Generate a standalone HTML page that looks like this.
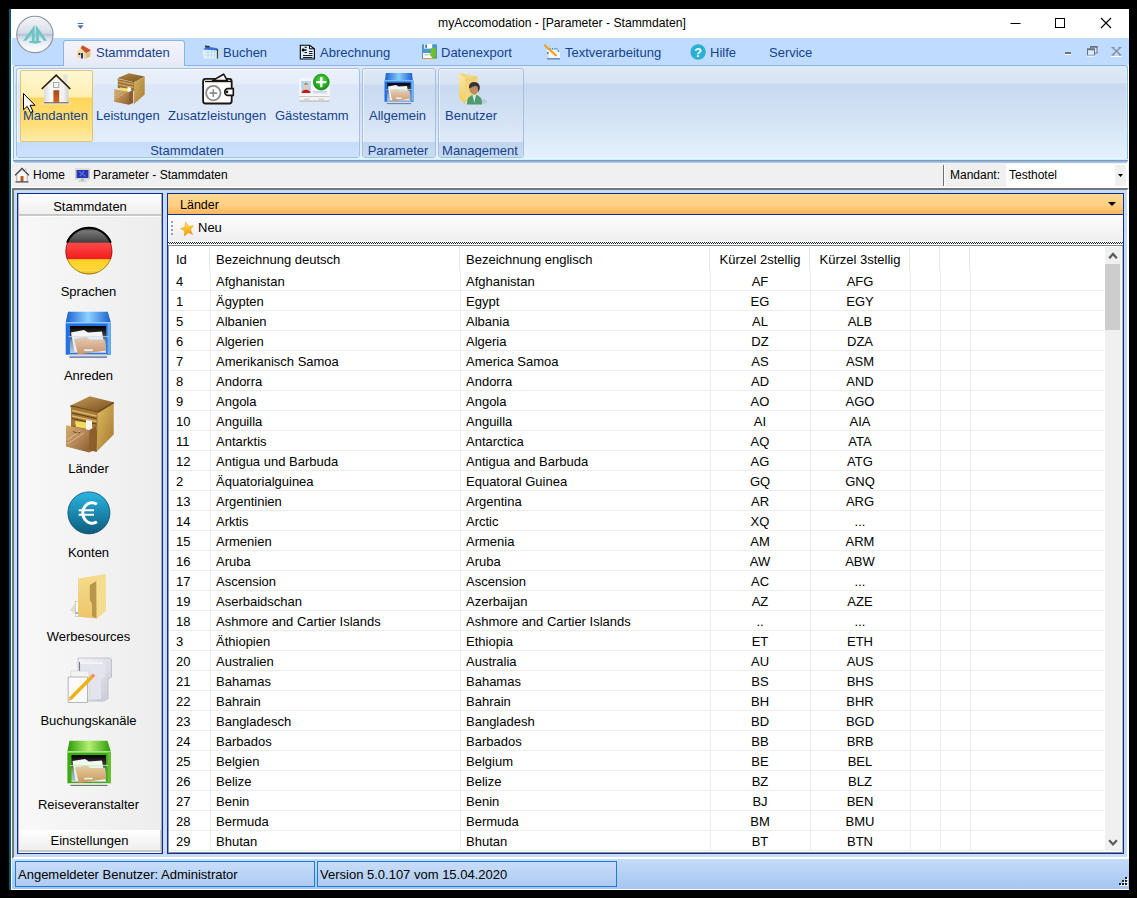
<!DOCTYPE html>
<html><head><meta charset="utf-8"><title>myAccomodation</title>
<style>
*{margin:0;padding:0;box-sizing:border-box}
html,body{width:1137px;height:898px;overflow:hidden;background:#000}
body{position:relative;font-family:"Liberation Sans",sans-serif;font-size:13px;color:#000}
.a{position:absolute}
svg{position:absolute;overflow:visible}
#win{position:absolute;left:9px;top:9px;width:1120px;height:881px;background:#fff}
#tealL{position:absolute;left:9px;top:9px;width:2px;height:881px;background:#0b5a70}
/* title */
#titletxt{position:absolute;left:438px;top:16px;font-size:12.2px;color:#000;white-space:nowrap;line-height:14px}
/* tab strip */
#tabs{position:absolute;left:12px;top:38px;width:1117px;height:27px;background:#bfdbff}
.tab{position:absolute;top:45px;white-space:nowrap;color:#15428b;font-size:13px;line-height:15px}
#acttab{position:absolute;left:63px;top:40px;width:122px;height:26px;border:1px solid #8db2e3;border-bottom:none;border-radius:3px 3px 0 0;background:linear-gradient(#f3f3fb,#e9ecf8 80%,#e2eaf6)}
/* ribbon */
#ribbon{position:absolute;left:13px;top:65px;width:1115px;height:95px;border:1px solid #8db2e3;border-bottom:none;border-radius:3px 3px 0 0;box-shadow:inset 1px 0 0 #d4f6ff,inset -1px 0 0 #d4f6ff;background:linear-gradient(#e0eaf6 0,#d7e4f3 17px,#c7d9f0 18px,#d2e2f4 50px,#e6f2fd 94px)}
#ribbonbot{position:absolute;left:13px;top:159px;width:1115px;height:4px;border-radius:0 0 3px 3px;background:linear-gradient(#c8f4ff 0 1px,#7f9abd 1px 2px,#96b3d8 2px 3px,#aac6e8 3px)}
.grp{position:absolute;top:68px;height:90px;border:1px solid #a7c0e0;border-radius:3px;background:linear-gradient(#dee8f5 0,#d8e4f3 15px,#c9daf0 16px,#d3e2f4 50px,#dfeaf8 73px);overflow:hidden;box-shadow:inset 1px 1px 0 rgba(255,255,255,.5)}
.grp.hot{background:linear-gradient(#eaf1fb 0,#e4edfa 15px,#dbe7f8 16px,#dde9f9 50px,#e4eefb 73px)}
.grp .lbl{position:absolute;left:0;top:73px;width:100%;height:16px;background:linear-gradient(#c1d5ef,#c9dbf2);color:#15428b;text-align:center;font-size:13px;line-height:17px;white-space:nowrap;text-indent:-2px}
.grp.hot .lbl{background:linear-gradient(#c5ddfb,#cde2fc)}
.rbt{position:absolute;top:109px;color:#15428b;font-size:13px;white-space:nowrap;line-height:14px}
/* address bar */
#addr{position:absolute;left:12px;top:163px;width:1117px;height:25px;background:#f0f0f0;border-top:1px solid #f4f2f0;border-bottom:1px solid #fff}
.at{position:absolute;top:168px;font-size:12px;white-space:nowrap;line-height:14px;color:#000}
/* main frame */
#frame{position:absolute;left:12px;top:188px;width:1117px;height:671px;border-top:2px solid #767676;border-left:2px solid #767676;border-bottom:2px solid #fff;border-right:2px solid #fff;background:#c6dcfa}
/* status */
#status{position:absolute;left:12px;top:859px;width:1117px;height:31px;background:linear-gradient(#c5dbf8,#a5c5f1);border-bottom:1px solid #fff}
.sp{position:absolute;top:861px;height:26px;border:1px solid #1b7ce0;white-space:nowrap;font-size:13px;padding-left:2px;line-height:26px;color:#000;background:linear-gradient(#c8ddf8,#aecbf2)}
/* left panel */
#lp{position:absolute;left:17px;top:193px;width:146px;height:661px;border:1px solid #0a2e9a;background:#fff}
.hdrbtn{position:absolute;left:19px;width:142px;height:22px;background:linear-gradient(#ffffff,#eeeeee);border-bottom:2px solid #c9c9c9;text-align:center;line-height:25px;font-size:13px;white-space:nowrap}
#lpbody{position:absolute;left:19px;top:217px;width:143px;height:613px;background:linear-gradient(90deg,#f8f8f8,#ededed)}
.li{position:absolute;left:17px;width:143px;text-align:center;font-size:13px;line-height:14px;white-space:nowrap}
/* content panel */
#cp{position:absolute;left:167px;top:193px;width:957px;height:661px;border:1px solid #0a2e9a;background:#fff}
#orange{position:absolute;left:168px;top:194px;width:955px;height:21px;background:linear-gradient(#ffd891 0,#ffcf84 55%,#feb55d 100%);border-bottom:1px solid #0a2e9a}
#tb{position:absolute;left:168px;top:215px;width:955px;height:30px;background:linear-gradient(#fdfdfd,#eeeeee 26px,#fff 27px)}
#checker{position:absolute;left:168px;top:242px;width:955px;height:3px}
#gline{position:absolute;left:168px;top:245px;width:955px;height:1px;background:#7f8792}
#grid{position:absolute;left:168px;top:246px;width:955px;height:607px;background:#fff;overflow:hidden}
.gh{position:absolute;top:253px;white-space:nowrap;line-height:14px}
.gr{position:absolute;left:170px;width:934px;height:20px;line-height:20px;border-bottom:1px solid #ededed;white-space:nowrap}
.gr span{position:absolute;top:1px}
.c0{left:6px}.c1{left:46px}.c2{left:296px}.c3{left:540px;width:100px;text-align:center}.c4{left:640px;width:100px;text-align:center}
.vl{position:absolute;width:1px;background:#ececec}

</style></head>
<body>
<div id="win"></div>
<div id="tealL"></div>
<!-- title bar -->
<div id="titletxt">myAccomodation - [Parameter - Stammdaten]</div>
<svg style="left:0;top:0" width="1137" height="40">
<path d="M1010.5 23.5H1020.5" stroke="#000" stroke-width="1"/>
<rect x="1055.5" y="18.5" width="9" height="9" fill="none" stroke="#000" stroke-width="1"/>
<path d="M1101 18L1111 28M1111 18L1101 28" stroke="#000" stroke-width="1.1"/>
<path d="M77.7 23.5H83.3" stroke="#4a6fb3" stroke-width="1"/>
<path d="M77.5 25.3H83.5L80.5 29Z" fill="#4a6fb3"/>
</svg>

<!-- tabs -->
<div id="tabs"></div>
<div id="ribbon"></div>
<div id="ribbonbot"></div>
<svg style="left:0;top:0" width="80" height="70">
<defs>
<linearGradient id="orbg" x1="0" y1="0" x2="0" y2="1">
<stop offset="0" stop-color="#f3f5f9"/>
<stop offset="0.3" stop-color="#e3e7ef"/>
<stop offset="0.47" stop-color="#d3dae7"/>
<stop offset="0.5" stop-color="#b4c1d8"/>
<stop offset="0.62" stop-color="#dfe4ee"/>
<stop offset="0.85" stop-color="#f4f6fa"/>
<stop offset="1" stop-color="#ffffff"/>
</linearGradient>
</defs>
<circle cx="34.9" cy="34.4" r="18.2" fill="url(#orbg)" stroke="#8e939e" stroke-width="1.1"/>
<path d="M23 40.8L34.7 25V41.5H31.8V33.4L26.3 40.8Z" fill="#6cc5c3"/>
<path d="M47 40.8L35.9 25V41.5H38.9V33.6L43.7 40.8Z" fill="#6cc5c3"/>
<path d="M29 40.9H41V42.4L35.3 43.8 29 42.4Z" fill="#6cc5c3"/>
</svg>

<div id="acttab"></div>
<div class="tab" style="left:96px">Stammdaten</div>
<div class="tab" style="left:223px">Buchen</div>
<div class="tab" style="left:320px">Abrechnung</div>
<div class="tab" style="left:441px">Datenexport</div>
<div class="tab" style="left:565px">Textverarbeitung</div>
<div class="tab" style="left:710px">Hilfe</div>
<div class="tab" style="left:769px">Service</div>
<svg style="left:0;top:0" width="720" height="64">
<!-- house -->
<path d="M77 51.5L81 47.5L85.5 51.5V58.8L77 58Z" fill="#f6d9a3"/>
<path d="M85.5 52L90.3 50.5V56.8L85.5 58.8Z" fill="#e2bd80"/>
<path d="M80.5 48L82.5 45.3L91 50.2L86 53Z" fill="#c6522a"/>
<rect x="78.5" y="53" width="1.8" height="2" fill="#1d2d44"/>
<rect x="81" y="53" width="2" height="5.5" fill="#17409a"/>
<!-- calendar -->
<path d="M203 50.5L217.3 49V58.3L203.5 58.8Z" fill="#e6f1fb"/>
<path d="M206 46.5L217.5 48.2L217.5 50.5L203.5 49.5Z" fill="#3a6fd3"/>
<path d="M205 45.5L210 46L209 47.5L205 47Z" fill="#333"/>
<rect x="216.8" y="49" width="1.3" height="9.5" fill="#4c4224"/>
<path d="M205 52H216M204.5 55H216M208 50V58M211.5 50V58M214.5 50V58" stroke="#a9d3e8" stroke-width="0.7"/>
<!-- doc -->
<path d="M300.3 45.2H309.7L314.4 48.8V59H300.3Z" fill="#dbeeff" stroke="#000" stroke-width="1.1"/>
<path d="M309.5 45V48.8H314.2" fill="none" stroke="#000" stroke-width="1"/>
<path d="M302.5 50H306.5M303.5 48.5L302.3 50L303.5 51.5" stroke="#000" stroke-width="1.3" fill="none"/>
<path d="M304.5 47.3H307M304.5 52.5H307M309 51.5H312.5M309 53.5H312.5M303 55.5H312.5M303 57.5H312.5" stroke="#000" stroke-width="0.9"/>
<!-- floppy -->
<rect x="422" y="44.2" width="15" height="14.8" rx="0.8" fill="#4a98c9"/>
<rect x="424.2" y="44" width="8" height="4.6" fill="#fff"/>
<rect x="425.3" y="44.5" width="1.6" height="3.4" fill="#2f73a6"/>
<rect x="423" y="53" width="9" height="5" fill="#f8fbff"/>
<rect x="424.5" y="54.3" width="4" height="1" fill="#a9b4c8"/>
<rect x="422.5" y="58" width="14" height="1" fill="#d79a3a"/>
<path d="M431 48H435.5V53.5H437L433.2 59L429 53.5H431Z" fill="#74c11a"/>
<!-- notepad -->
<rect x="547" y="50" width="13" height="9" fill="#f4f6fb"/>
<rect x="547" y="58.2" width="13" height="1.2" fill="#3f74b8"/>
<rect x="547.5" y="52" width="0.8" height="6" fill="#f19aa0"/>
<circle cx="547.8" cy="53" r="0.9" fill="#2784d6"/><circle cx="558.5" cy="51" r="0.9" fill="#2784d6"/>
<path d="M550 48V49.5M552.5 48V49.5M555 48V49.5M557 48V49.5" stroke="#3a6db5" stroke-width="0.9"/>
<path d="M545 45.5L556 55.5" stroke="#f0a500" stroke-width="2.2"/>
<path d="M544.3 44.6L545.5 45.8" stroke="#e99a8a" stroke-width="2.2"/>
<circle cx="555.9" cy="55.5" r="0.8" fill="#d87a4a"/>
<!-- help -->
<circle cx="698.1" cy="52" r="7.7" fill="#29b0d3"/>
<text x="698.1" y="56.6" text-anchor="middle" font-family="Liberation Sans" font-weight="bold" font-size="12.5" fill="#fff">?</text>
</svg>

<svg style="left:0;top:0" width="1137" height="64">
<rect x="1065" y="52" width="6" height="2" fill="#6a7380"/>
<rect x="1065" y="54" width="6" height="1" fill="#fff"/>
<rect x="1090.5" y="46.5" width="6.5" height="6.5" fill="#dceafc" stroke="#6a7380" stroke-width="1"/>
<rect x="1090" y="46" width="7.5" height="1.8" fill="#6a7380"/>
<rect x="1087.5" y="49" width="7" height="6.3" fill="#dceafc" stroke="#6a7380" stroke-width="1"/>
<rect x="1087" y="48.5" width="8" height="1.8" fill="#6a7380"/>
<rect x="1087" y="55.6" width="8" height="1" fill="#fff"/>
<path d="M1112.5 47.5L1120.5 55M1120.5 47.5L1112.5 55" stroke="#8691a2" stroke-width="1.5"/>
<path d="M1111.5 47.5H1114.5M1118.5 47.5H1121.5M1111.5 55H1114.5M1118.5 55H1121.5" stroke="#8691a2" stroke-width="1"/>
<rect x="1111" y="56" width="11" height="1" fill="#fff"/>
</svg>

<!-- ribbon -->
<div class="grp hot" style="left:16px;width:344px"><div class="lbl">Stammdaten</div></div>
<div class="grp" style="left:362px;width:74px"><div class="lbl">Parameter</div></div>
<div class="grp" style="left:438px;width:86px"><div class="lbl">Management</div></div>
<div class="a" style="left:20px;top:70px;width:73px;height:72px;border:1px solid #e1c47c;border-radius:2px;background:linear-gradient(#fff7d2 0,#ffefb0 26px,#ffd65a 27px,#ffdf7a 55px,#ffecb0 71px)"></div>
<div class="rbt" style="left:23px">Mandanten</div>
<div class="rbt" style="left:96px">Leistungen</div>
<div class="rbt" style="left:168px">Zusatzleistungen</div>
<div class="rbt" style="left:275px">Gästestamm</div>
<div class="rbt" style="left:369px">Allgemein</div>
<div class="rbt" style="left:445px">Benutzer</div>
<svg style="left:0;top:0" width="540" height="120">
<defs>
<linearGradient id="wallg" x1="0" y1="0" x2="1" y2="0"><stop offset="0" stop-color="#dcdcdc"/><stop offset="0.3" stop-color="#fbfbfb"/><stop offset="0.8" stop-color="#f1f1f1"/><stop offset="1" stop-color="#cfcfcf"/></linearGradient>
<linearGradient id="doorg" x1="0" y1="0" x2="0" y2="1"><stop offset="0" stop-color="#a9481a"/><stop offset="1" stop-color="#d2651f"/></linearGradient>
<linearGradient id="cabtop" x1="0" y1="0" x2="1" y2="1"><stop offset="0" stop-color="#b48a45"/><stop offset="1" stop-color="#7a5022"/></linearGradient>
<linearGradient id="cabside" x1="0" y1="0" x2="1" y2="1"><stop offset="0" stop-color="#d7b35e"/><stop offset="1" stop-color="#a57a36"/></linearGradient>
<linearGradient id="cabfront" x1="0" y1="0" x2="1" y2="1"><stop offset="0" stop-color="#d8b373"/><stop offset="0.5" stop-color="#b88a52"/><stop offset="1" stop-color="#8f6030"/></linearGradient>
<linearGradient id="blid" x1="0" y1="0" x2="1" y2="0"><stop offset="0" stop-color="#1a5fd0"/><stop offset="0.5" stop-color="#86cdff"/><stop offset="1" stop-color="#1a5fd0"/></linearGradient>
<linearGradient id="opn1" x1="0" y1="0" x2="0" y2="1"><stop offset="0" stop-color="#000"/><stop offset="0.3" stop-color="#333"/><stop offset="0.6" stop-color="#8a9aaa"/><stop offset="1" stop-color="#c0ccd8"/></linearGradient>
<linearGradient id="fold" x1="0" y1="0" x2="0" y2="1"><stop offset="0" stop-color="#f2d3b5"/><stop offset="1" stop-color="#d99a62"/></linearGradient>
<radialGradient id="grn" cx="0.5" cy="0.4" r="0.6"><stop offset="0" stop-color="#5fe04a"/><stop offset="1" stop-color="#0a8f12"/></radialGradient>
<linearGradient id="yfold" x1="0" y1="0" x2="0" y2="1"><stop offset="0" stop-color="#fbe9a6"/><stop offset="1" stop-color="#f0c95a"/></linearGradient>
</defs>
<!-- house -->
<rect x="63.3" y="74.5" width="4.2" height="10" fill="#e4e2dc"/>
<path d="M44 88.5L56.2 77L68.5 88.5V103H44Z" fill="url(#wallg)"/>
<path d="M41.7 89L56.2 75.2L70.3 89" fill="none" stroke="#2b1c12" stroke-width="1.7"/>
<rect x="53.5" y="82.6" width="5.4" height="4.8" fill="#f2f2f2" stroke="#9a9a9a" stroke-width="0.8"/>
<rect x="53.4" y="90.2" width="5.8" height="12.3" fill="url(#doorg)"/>
<rect x="44" y="102.3" width="24.5" height="1.3" fill="#5a524a"/>
<rect x="40.5" y="103.4" width="31" height="1" fill="#e9e6e0"/>
<!-- cabinet -->
<path d="M117.2 78.3L129 73.2L144.7 76.4L134.2 82.3Z" fill="url(#cabtop)"/>
<path d="M134.2 82.3L144.7 76.4V94.6L133.7 104.3Z" fill="url(#cabside)"/>
<path d="M117.8 79L134.2 82.5V91L117.8 88Z" fill="#9d7236"/>
<path d="M118.5 81.5L133.5 84.3M118.5 84.5L133.5 87.3" stroke="#d8b46a" stroke-width="1"/>
<path d="M120 87.5L128 88.5L131.5 92L120 91Z" fill="#f4e06a"/>
<path d="M127.5 87L131 87.5L131 92.5L127.5 92Z" fill="#f6f6f6"/>
<path d="M114.2 89L129 92V104.7L114.2 101.8Z" fill="url(#cabfront)"/>
<path d="M129 92L133.1 90V103L129 104.7Z" fill="#8a5e2c"/>
<path d="M115 96L123 90.5M115 99L126 92" stroke="#e8cfa0" stroke-width="0.8" opacity="0.7"/>
<!-- wallet -->
<rect x="203.1" y="78.9" width="28.6" height="24.6" rx="2.5" fill="#fff" stroke="#1a1510" stroke-width="1.8"/>
<path d="M212.5 80.6L223.6 74.2L227.4 80.6Z" fill="#fff" stroke="#1a1510" stroke-width="1.6" stroke-linejoin="round"/>
<path d="M205 81.5H231.5" stroke="#1a1510" stroke-width="1.4"/>
<circle cx="213.3" cy="93.1" r="7.2" fill="#fff" stroke="#8c8c8c" stroke-width="1.8"/>
<path d="M209.5 93.1H217.1M213.3 89.3V96.9" stroke="#8c8c8c" stroke-width="1.6"/>
<path d="M233.3 88.6H227.2A3.6 3.6 0 0 0 227.2 95.4H233.3Z" fill="#fff" stroke="#1a1510" stroke-width="1.6"/>
<circle cx="227" cy="91.9" r="1.3" fill="#1a1510"/>
<!-- card -->
<rect x="299.2" y="78.5" width="30.3" height="22" rx="1" fill="#f2f2f2"/>
<rect x="299.2" y="78.5" width="30.3" height="17.8" fill="#f7f7f7"/>
<rect x="299.2" y="96" width="30.3" height="1" fill="#c8c8c8"/>
<path d="M304 98.5H309.5V100.5H304ZM318.5 98.5H324V100.5H318.5Z" fill="#d6d6d6"/>
<rect x="299.2" y="100.6" width="30.3" height="1" fill="#b5b5b5"/>
<rect x="301.1" y="81" width="9.8" height="12.1" fill="#b9d3ee"/>
<ellipse cx="306" cy="86.5" rx="2" ry="2.6" fill="#f0c8a0"/>
<path d="M304 84.5Q306 82 308 84.5" fill="#8a5a3a"/>
<path d="M301.6 93.1Q302.5 89.8 306 89.8Q309.5 89.8 310.5 93.1Z" fill="#c8161a"/>
<path d="M313 91.5H327M313 93H327" stroke="#9db6e0" stroke-width="0.6"/>
<circle cx="321.3" cy="82.1" r="8" fill="url(#grn)" stroke="#0b7d10" stroke-width="0.6"/>
<path d="M316.2 82.1H326.4M321.3 77V87.2" stroke="#fff" stroke-width="2.3"/>
<!-- blue drawer -->
<path d="M385.9 73H412L412.8 80.5H384.9Z" fill="url(#blid)"/>
<rect x="384.5" y="80.3" width="29" height="21.5" fill="#2170e2"/>
<rect x="384.5" y="80.3" width="29" height="1" fill="#9fd8ff"/>
<rect x="411.5" y="81" width="2" height="20" fill="#7bb8f0"/>
<rect x="387.2" y="82.9" width="23.3" height="18" fill="url(#opn1)"/>
<path d="M388 86.5L396 85L398.5 86.5L407 86L409.5 100H390Z" fill="#f4f4f4"/>
<path d="M390 90.5L397.5 89L399.5 90.5H409.5L410.5 98.5L392.5 101.5Z" fill="url(#fold)"/>
<rect x="396" y="97.5" width="5.5" height="1.5" fill="#f7f7f7"/>
<rect x="386.5" y="89.3" width="25" height="0.7" fill="#bfe0ff"/>
<rect x="386.5" y="90" width="25" height="11" fill="#7ab8ff" opacity="0.1"/>
<rect x="386.8" y="101.5" width="24.4" height="1.8" fill="#dcdcdc"/>
<rect x="386.8" y="103.2" width="24.4" height="0.9" fill="#5a6ea8"/>
<!-- folder user -->
<path d="M459 73L477.5 76.5V100L464.7 102Z" fill="#f2d780"/>
<path d="M459 73.5L465 78.5V104.8L459 97.5Z" fill="url(#yfold)"/>
<path d="M465 79L477.5 76.5V80L465 82Z" fill="#e9c96a" opacity="0.5"/>
<ellipse cx="483" cy="101.5" rx="4" ry="2.5" fill="#9aa8c0" opacity="0.35"/>
<path d="M467 104.5Q466.5 95.5 474.5 94.5Q482.5 95.5 482 104.5Z" fill="#4e9c6e"/>
<path d="M472.5 95L474.3 103L476 95Z" fill="#d9ecea"/>
<ellipse cx="474" cy="88.6" rx="4.6" ry="5.8" fill="#bd8c62"/>
<path d="M469 87.5Q468.5 82 474.5 82Q480 82 479.8 88.5L478.5 92.5L477.5 86.5Q474 84.8 469.5 88.5Z" fill="#353535"/>
<!-- cursor -->
<path d="M23.5 93.5V109.8L27.2 106.3L30.5 112.5L33 111.4L30 105.3H35Z" fill="#fff" stroke="#000" stroke-width="1" stroke-linejoin="miter"/>
</svg>

<!-- address bar -->
<div id="addr"></div>
<div class="at" style="left:33px">Home</div>
<div class="at" style="left:93px">Parameter - Stammdaten</div>
<div class="a" style="left:943px;top:165px;width:1px;height:21px;background:#707070"></div>
<div class="a" style="left:944px;top:165px;width:1px;height:21px;background:#fff"></div>
<div class="at" style="left:950px">Mandant:</div>
<div class="a" style="left:1006px;top:164px;width:122px;height:23px;background:#fff"></div>
<div class="a" style="left:1115px;top:165px;width:11px;height:21px;background:#f0f0f0"></div>
<div class="at" style="left:1009px">Testhotel</div>
<svg style="left:1118px;top:174px" width="6" height="3"><path d="M0 0H5L2.5 3Z" fill="#000"/></svg>
<svg style="left:0;top:0" width="100" height="190">
<path d="M16.8 174.5L22 169.5L27.2 174.5V181.5H16.8Z" fill="#fafafa" stroke="#9a9a9a" stroke-width="0.8"/>
<path d="M15 175.3L22 168.3L29 175.3" fill="none" stroke="#3a3a3a" stroke-width="1.2"/>
<rect x="25" y="168.5" width="1.5" height="3" fill="#ccc"/>
<rect x="20.5" y="176" width="3" height="5.5" fill="#c4561a"/>
<rect x="15.5" y="181.3" width="13" height="1.3" fill="#5a5a5a"/>
<rect x="75.5" y="169" width="14" height="10" fill="#e8e8e8" stroke="#b8b8b8" stroke-width="0.6"/>
<rect x="76.5" y="170" width="12" height="8" fill="#2a36b0"/>
<path d="M79 171.5L86 176.5M84 171L80 176" stroke="#7f90ff" stroke-width="1.3" opacity="0.6"/>
<rect x="81" y="179" width="3" height="1.5" fill="#aaa"/>
<rect x="78.5" y="180.5" width="8" height="1.5" fill="#cfcfcf"/>
</svg>

<!-- main -->
<div id="frame"></div>
<div id="lp"></div>
<div class="hdrbtn" style="top:194px">Stammdaten</div>
<div id="lpbody"></div>
<div class="a" style="left:161px;top:194px;width:1px;height:659px;background:#a8a8a8"></div>
<div class="a" style="left:18px;top:194px;width:1px;height:659px;background:#b4b4b4"></div>
<div class="hdrbtn" style="top:830px;height:22px;line-height:22px;border-right:1px solid #d0d0d0">Einstellungen</div>
<div class="li" style="top:285px">Sprachen</div>
<div class="li" style="top:369px">Anreden</div>
<div class="li" style="top:462px">Länder</div>
<div class="li" style="top:546px">Konten</div>
<div class="li" style="top:630px">Werbesources</div>
<div class="li" style="top:714px">Buchungskanäle</div>
<div class="li" style="top:798px">Reiseveranstalter</div>
<svg style="left:0;top:0" width="170" height="800">
<defs>
<clipPath id="flagc"><circle cx="88.9" cy="251" r="23.5"/></clipPath>
<linearGradient id="fblk" x1="0" y1="0" x2="0" y2="1"><stop offset="0" stop-color="#000"/><stop offset="0.25" stop-color="#777"/><stop offset="1" stop-color="#3e3e3e"/></linearGradient>
<linearGradient id="fred" x1="0" y1="0" x2="0" y2="1"><stop offset="0" stop-color="#ff4a4a"/><stop offset="1" stop-color="#f31a1a"/></linearGradient>
<linearGradient id="fgold" x1="0" y1="0" x2="0" y2="1"><stop offset="0" stop-color="#ffd21a"/><stop offset="0.7" stop-color="#fcd843"/><stop offset="1" stop-color="#e3a900"/></linearGradient>
<linearGradient id="euro" x1="0" y1="0" x2="0" y2="1"><stop offset="0" stop-color="#2ab6e4"/><stop offset="1" stop-color="#0c5c7c"/></linearGradient>
<linearGradient id="blid2" x1="0" y1="0" x2="1" y2="0"><stop offset="0" stop-color="#1a5fd0"/><stop offset="0.5" stop-color="#8fd2ff"/><stop offset="1" stop-color="#1a5fd0"/></linearGradient>
<linearGradient id="glid2" x1="0" y1="0" x2="1" y2="0"><stop offset="0" stop-color="#2a9a08"/><stop offset="0.5" stop-color="#b4f070"/><stop offset="1" stop-color="#2a9a08"/></linearGradient>
<linearGradient id="opn" x1="0" y1="0" x2="0" y2="1"><stop offset="0" stop-color="#000"/><stop offset="0.3" stop-color="#333"/><stop offset="0.6" stop-color="#8a9aaa"/><stop offset="1" stop-color="#c0ccd8"/></linearGradient>
<linearGradient id="fold2" x1="0" y1="0" x2="0" y2="1"><stop offset="0" stop-color="#f0cfae"/><stop offset="1" stop-color="#d8925a"/></linearGradient>
<linearGradient id="cabtop2" x1="0" y1="0" x2="1" y2="1"><stop offset="0" stop-color="#c29a55"/><stop offset="1" stop-color="#7a4f22"/></linearGradient>
<linearGradient id="cabside2" x1="0" y1="0" x2="1" y2="1"><stop offset="0" stop-color="#e0bd60"/><stop offset="1" stop-color="#a47632"/></linearGradient>
<linearGradient id="cabfront2" x1="0" y1="0" x2="1" y2="1"><stop offset="0" stop-color="#d4ad6c"/><stop offset="0.5" stop-color="#b7895a"/><stop offset="1" stop-color="#8a5c2e"/></linearGradient>
<linearGradient id="yf2" x1="0" y1="0" x2="0" y2="1"><stop offset="0" stop-color="#f6dc8c"/><stop offset="1" stop-color="#ecc66a"/></linearGradient>
<linearGradient id="gf2" x1="0" y1="0" x2="1" y2="1"><stop offset="0" stop-color="#f4f4f8"/><stop offset="1" stop-color="#c9c9d8"/></linearGradient>
</defs>
<!-- flag -->
<g clip-path="url(#flagc)">
<rect x="65" y="227" width="48" height="16" fill="url(#fblk)"/>
<rect x="65" y="242.7" width="48" height="16.8" fill="url(#fred)"/>
<rect x="65" y="259.4" width="48" height="16" fill="url(#fgold)"/>
</g>
<circle cx="88.9" cy="251" r="23" fill="none" stroke="#000" stroke-width="1" opacity="0.35"/>
<path d="M67 242.7A23.5 23.5 0 0 1 110.8 242.7" fill="none" stroke="#000" stroke-width="2"/>
<!-- blue drawer -->
<path d="M68 311.7H107.8L110.8 322.4H65.7Z" fill="url(#blid2)"/>
<rect x="65.7" y="322.2" width="45.1" height="32.5" fill="#2271e3"/>
<rect x="65.7" y="322.2" width="45.1" height="1.2" fill="#a8dcff"/>
<rect x="107.5" y="323" width="3.3" height="31" fill="#6aaeee"/>
<rect x="70" y="326" width="36.1" height="27" fill="url(#opn)"/>
<path d="M71 332.5L84 330L88 332.5L102 331.5L105.5 352H74.5Z" fill="#f4f4f4"/>
<path d="M74 339L86 336.8L89.5 339.5H104.5L106 350.5L78 354.5Z" fill="url(#fold2)"/>
<rect x="84" y="349" width="9" height="2.2" fill="#fafafa" stroke="#c9a27a" stroke-width="0.5"/>
<rect x="68.5" y="336.3" width="40" height="0.8" fill="#bfe0ff"/>
<rect x="68.5" y="337" width="40" height="17" fill="#6bb0ff" opacity="0.1"/>
<rect x="69.4" y="354.4" width="37.7" height="2.2" fill="#dadada"/>
<rect x="69.4" y="356.5" width="37.7" height="1.3" fill="#5a6ea8"/>
<!-- cabinet -->
<path d="M70.5 405.6L89.8 396.2L113.7 402.2L97.4 412Z" fill="url(#cabtop2)"/>
<path d="M97.4 412L113.7 402.2V434.4L96.6 451.8Z" fill="url(#cabside2)"/>
<path d="M70.5 406L97.4 412.3L113.7 402.5" fill="none" stroke="#6e4a1c" stroke-width="1.8"/>
<path d="M71 406.5L97.4 412.5L96.8 452L71 446Z" fill="#8a602a"/>
<path d="M71 406.5L97.4 412.5V431L71 425Z" fill="#a47836"/>
<path d="M72 410.5L96.5 416M72 416L96.5 421.5" stroke="#dcb86a" stroke-width="1.6"/><path d="M72 413L96.5 418.5M72 418.5L96.5 424" stroke="#5a3a14" stroke-width="0.9"/>
<path d="M75 421L90 423L94 430L76 427Z" fill="#f2dc60"/>
<path d="M86 420L92 421V431L86 430Z" fill="#f6f6f6"/>
<path d="M66 425.3L89.4 429.9V452.6L66 446.5Z" fill="url(#cabfront2)"/>
<path d="M89.4 429.9L95.9 426V449L89.4 452.6Z" fill="#8c5f2c"/>
<path d="M73 431.5Q76 433.5 80 432.5" stroke="#6a4a20" stroke-width="1" fill="none"/>
<path d="M67 440L80 431M67 444L84 433" stroke="#f0d8a8" stroke-width="1" opacity="0.6"/>
<!-- euro -->
<circle cx="88.9" cy="512.9" r="21" fill="url(#euro)" stroke="#0b4a66" stroke-width="0.8"/>
<path d="M96.9 504.2A9.3 10.3 0 1 0 96.9 521.8" fill="none" stroke="#fff" stroke-width="3"/>
<path d="M78.7 510.3H94M78.7 514.8H94" stroke="#fff" stroke-width="2"/>
<!-- folder -->
<path d="M70 610L75 603L78 616Z" fill="#cfcfcf" opacity="0.6"/>
<rect x="75.4" y="601.5" width="3" height="15" fill="#fff" stroke="#c8b27a" stroke-width="0.6"/>
<circle cx="77" cy="613" r="0.9" fill="#3a8ef0"/>
<path d="M78 578.5L105.5 574V611L96.5 618.5L78 616.8Z" fill="url(#yf2)"/>
<path d="M89.8 585L96.5 581V618.3L92 616.5V603.5L89.8 600.5Z" fill="#b8964a"/>
<path d="M96.5 580.8L105.5 574.6V611L96.8 618.5Z" fill="#f5dd8e"/>
<!-- docs + pencil -->
<path d="M78.2 658H110.5L111.5 660V677L108 679.5V698.5L104 701H78.2Z" fill="url(#gf2)" stroke="#b9b9c8" stroke-width="0.8"/>
<path d="M80 662.5H103.5L105 664V676.5L101 680V699H80Z" fill="#e4e4ee"/><path d="M79.5 662V700" stroke="#7a7a88" stroke-width="1.1"/><path d="M80 663H103" stroke="#fafafa" stroke-width="1.3"/>
<path d="M71 671H89V700H71Z" fill="#f3f3f3" stroke="#cfcfcf" stroke-width="0.6"/>
<path d="M68.2 677H87.5V702.5H68.2Z" fill="#fafafa" stroke="#a5a5a5" stroke-width="0.8"/>
<path d="M70 699L92.5 676.3" stroke="#f0b212" stroke-width="3.4"/>
<path d="M92.2 676.6L94.2 674.6" stroke="#f08a7a" stroke-width="3.4"/>
<path d="M69.2 700.3L70.6 698.6" stroke="#e8b88a" stroke-width="2"/>
<!-- green drawer -->
<path d="M69.5 740.7H107.5L110.8 751.5H67.4Z" fill="url(#glid2)"/>
<rect x="67.4" y="751.3" width="43.4" height="32" fill="#3daa10"/>
<rect x="67.4" y="751.3" width="43.4" height="1.2" fill="#c8f8a0"/>
<rect x="107.6" y="752" width="3.2" height="31" fill="#68c030"/>
<rect x="71.5" y="755" width="34.5" height="27" fill="url(#opn)"/>
<path d="M72.5 761L85 759L89 761.5L102 760.5L105.5 781H75.5Z" fill="#f6f6f6"/>
<path d="M75 767.5L87 765.5L90.5 768H105L106 779L79 783Z" fill="url(#fold2)"/>
<rect x="84" y="777.5" width="9" height="2.2" fill="#fafafa" stroke="#c9a27a" stroke-width="0.5"/>
<rect x="70" y="765" width="38" height="0.8" fill="#c8f5b0"/>
<rect x="70" y="765.5" width="38" height="17" fill="#6cd04a" opacity="0.1"/>
<rect x="70.5" y="783" width="37" height="2" fill="#dcdcdc"/>
<rect x="70.5" y="785" width="37" height="1" fill="#6a7a6a"/>
</svg>

<div id="cp"></div>
<div id="orange"></div>
<div class="a" style="left:180px;top:198px;font-size:12.5px;line-height:14px">Länder</div>
<svg style="left:1108px;top:202px" width="8" height="4"><path d="M0 0H8L4 4Z" fill="#000"/></svg>
<div id="tb"></div>
<svg style="left:171px;top:221px" width="2" height="14"><rect x="0" y="0" width="2" height="2" fill="#a0a0a0"/><rect x="0" y="4" width="2" height="2" fill="#a0a0a0"/><rect x="0" y="8" width="2" height="2" fill="#a0a0a0"/><rect x="0" y="12" width="2" height="2" fill="#a0a0a0"/></svg>
<div class="a" style="left:198px;top:221px;line-height:14px">Neu</div>
<svg style="left:0;top:0" width="200" height="240">
<defs><linearGradient id="stg" x1="0" y1="0" x2="0" y2="1"><stop offset="0" stop-color="#ffe680"/><stop offset="0.5" stop-color="#fbc02d"/><stop offset="1" stop-color="#f09010"/></linearGradient></defs>
<path transform="rotate(-12 187.2 229)" d="M187.2 221.5L189.2 226.6L194 227.2L190.4 230.3L191.5 235.6L187.2 232.8L182.9 235.6L184 230.3L180.6 227.2L185.2 226.6Z" fill="url(#stg)" stroke="#e3a020" stroke-width="0.4"/>
</svg>

<svg id="checker" width="955" height="3"><defs><pattern id="ck" width="2" height="2" patternUnits="userSpaceOnUse"><rect x="0" y="0" width="1" height="1" fill="#222"/><rect x="1" y="1" width="1" height="1" fill="#222"/><rect x="1" y="0" width="1" height="1" fill="#fff"/><rect x="0" y="1" width="1" height="1" fill="#fff"/></pattern></defs><rect width="955" height="2" fill="url(#ck)"/></svg>
<div id="gline"></div>
<div id="grid"></div>
<div class="gh" style="left:176px">Id</div>
<div class="gh" style="left:216px">Bezeichnung deutsch</div>
<div class="gh" style="left:466px">Bezeichnung englisch</div>
<div class="gh" style="left:710px;width:100px;text-align:center">Kürzel 2stellig</div>
<div class="gh" style="left:810px;width:100px;text-align:center">Kürzel 3stellig</div>
<div class="gr" style="top:271px"><span class="c0">4</span><span class="c1">Afghanistan</span><span class="c2">Afghanistan</span><span class="c3">AF</span><span class="c4">AFG</span></div>
<div class="gr" style="top:291px"><span class="c0">1</span><span class="c1">Ägypten</span><span class="c2">Egypt</span><span class="c3">EG</span><span class="c4">EGY</span></div>
<div class="gr" style="top:311px"><span class="c0">5</span><span class="c1">Albanien</span><span class="c2">Albania</span><span class="c3">AL</span><span class="c4">ALB</span></div>
<div class="gr" style="top:331px"><span class="c0">6</span><span class="c1">Algerien</span><span class="c2">Algeria</span><span class="c3">DZ</span><span class="c4">DZA</span></div>
<div class="gr" style="top:351px"><span class="c0">7</span><span class="c1">Amerikanisch Samoa</span><span class="c2">America Samoa</span><span class="c3">AS</span><span class="c4">ASM</span></div>
<div class="gr" style="top:371px"><span class="c0">8</span><span class="c1">Andorra</span><span class="c2">Andorra</span><span class="c3">AD</span><span class="c4">AND</span></div>
<div class="gr" style="top:391px"><span class="c0">9</span><span class="c1">Angola</span><span class="c2">Angola</span><span class="c3">AO</span><span class="c4">AGO</span></div>
<div class="gr" style="top:411px"><span class="c0">10</span><span class="c1">Anguilla</span><span class="c2">Anguilla</span><span class="c3">AI</span><span class="c4">AIA</span></div>
<div class="gr" style="top:431px"><span class="c0">11</span><span class="c1">Antarktis</span><span class="c2">Antarctica</span><span class="c3">AQ</span><span class="c4">ATA</span></div>
<div class="gr" style="top:451px"><span class="c0">12</span><span class="c1">Antigua und Barbuda</span><span class="c2">Antigua and Barbuda</span><span class="c3">AG</span><span class="c4">ATG</span></div>
<div class="gr" style="top:471px"><span class="c0">2</span><span class="c1">Äquatorialguinea</span><span class="c2">Equatoral Guinea</span><span class="c3">GQ</span><span class="c4">GNQ</span></div>
<div class="gr" style="top:491px"><span class="c0">13</span><span class="c1">Argentinien</span><span class="c2">Argentina</span><span class="c3">AR</span><span class="c4">ARG</span></div>
<div class="gr" style="top:511px"><span class="c0">14</span><span class="c1">Arktis</span><span class="c2">Arctic</span><span class="c3">XQ</span><span class="c4">...</span></div>
<div class="gr" style="top:531px"><span class="c0">15</span><span class="c1">Armenien</span><span class="c2">Armenia</span><span class="c3">AM</span><span class="c4">ARM</span></div>
<div class="gr" style="top:551px"><span class="c0">16</span><span class="c1">Aruba</span><span class="c2">Aruba</span><span class="c3">AW</span><span class="c4">ABW</span></div>
<div class="gr" style="top:571px"><span class="c0">17</span><span class="c1">Ascension</span><span class="c2">Ascension</span><span class="c3">AC</span><span class="c4">...</span></div>
<div class="gr" style="top:591px"><span class="c0">19</span><span class="c1">Aserbaidschan</span><span class="c2">Azerbaijan</span><span class="c3">AZ</span><span class="c4">AZE</span></div>
<div class="gr" style="top:611px"><span class="c0">18</span><span class="c1">Ashmore and Cartier Islands</span><span class="c2">Ashmore and Cartier Islands</span><span class="c3">..</span><span class="c4">...</span></div>
<div class="gr" style="top:631px"><span class="c0">3</span><span class="c1">Äthiopien</span><span class="c2">Ethiopia</span><span class="c3">ET</span><span class="c4">ETH</span></div>
<div class="gr" style="top:651px"><span class="c0">20</span><span class="c1">Australien</span><span class="c2">Australia</span><span class="c3">AU</span><span class="c4">AUS</span></div>
<div class="gr" style="top:671px"><span class="c0">21</span><span class="c1">Bahamas</span><span class="c2">Bahamas</span><span class="c3">BS</span><span class="c4">BHS</span></div>
<div class="gr" style="top:691px"><span class="c0">22</span><span class="c1">Bahrain</span><span class="c2">Bahrain</span><span class="c3">BH</span><span class="c4">BHR</span></div>
<div class="gr" style="top:711px"><span class="c0">23</span><span class="c1">Bangladesch</span><span class="c2">Bangladesh</span><span class="c3">BD</span><span class="c4">BGD</span></div>
<div class="gr" style="top:731px"><span class="c0">24</span><span class="c1">Barbados</span><span class="c2">Barbados</span><span class="c3">BB</span><span class="c4">BRB</span></div>
<div class="gr" style="top:751px"><span class="c0">25</span><span class="c1">Belgien</span><span class="c2">Belgium</span><span class="c3">BE</span><span class="c4">BEL</span></div>
<div class="gr" style="top:771px"><span class="c0">26</span><span class="c1">Belize</span><span class="c2">Belize</span><span class="c3">BZ</span><span class="c4">BLZ</span></div>
<div class="gr" style="top:791px"><span class="c0">27</span><span class="c1">Benin</span><span class="c2">Benin</span><span class="c3">BJ</span><span class="c4">BEN</span></div>
<div class="gr" style="top:811px"><span class="c0">28</span><span class="c1">Bermuda</span><span class="c2">Bermuda</span><span class="c3">BM</span><span class="c4">BMU</span></div>
<div class="gr" style="top:831px"><span class="c0">29</span><span class="c1">Bhutan</span><span class="c2">Bhutan</span><span class="c3">BT</span><span class="c4">BTN</span></div>
<div class="vl" style="left:209px;top:247px;height:24px;background:#e6e6e6"></div>
<div class="vl" style="left:459px;top:247px;height:24px;background:#e6e6e6"></div>
<div class="vl" style="left:709px;top:247px;height:24px;background:#e6e6e6"></div>
<div class="vl" style="left:809px;top:247px;height:24px;background:#e6e6e6"></div>
<div class="vl" style="left:909px;top:247px;height:24px;background:#e6e6e6"></div>
<div class="vl" style="left:939px;top:247px;height:24px;background:#e6e6e6"></div>
<div class="vl" style="left:969px;top:247px;height:24px;background:#e6e6e6"></div>
<div class="vl" style="left:210px;top:271px;height:580px"></div>
<div class="vl" style="left:460px;top:271px;height:580px"></div>
<div class="vl" style="left:710px;top:271px;height:580px"></div>
<div class="vl" style="left:810px;top:271px;height:580px"></div>
<div class="vl" style="left:910px;top:271px;height:580px"></div>
<div class="vl" style="left:940px;top:271px;height:580px"></div>
<div class="vl" style="left:970px;top:271px;height:580px"></div>
<div class="a" style="left:1105px;top:247px;width:16px;height:604px;background:#f0f0f0"></div>
<div class="a" style="left:1105px;top:264px;width:15px;height:66px;background:#cdcdcd"></div>
<svg style="left:1105px;top:247px" width="16" height="604">
<path d="M4.2 11.2L8 7L11.8 11.2" fill="none" stroke="#5a5a5a" stroke-width="2.3"/>
<path d="M4.2 593.2L8 597.4L11.8 593.2" fill="none" stroke="#5a5a5a" stroke-width="2.3"/>
</svg>

<div class="a" style="left:168px;top:852px;width:955px;height:1px;background:#8a8a8a"></div>
<div class="a" style="left:1122px;top:246px;width:1px;height:607px;background:#b0b0b0"></div>
<div class="a" style="left:168px;top:245px;width:1px;height:608px;background:#9a9a9a"></div>
<!-- status -->
<div id="status"></div>
<div class="sp" style="left:15px;width:300px">Angemeldeter Benutzer: Administrator</div>
<div class="sp" style="left:317px;width:300px">Version 5.0.107 vom 15.04.2020</div>
<svg style="left:1116px;top:875px" width="14" height="14">
<g fill="#fff"><rect x="10" y="3" width="2" height="2"/><rect x="7" y="6" width="2" height="2"/><rect x="10" y="6" width="2" height="2"/><rect x="4" y="9" width="2" height="2"/><rect x="7" y="9" width="2" height="2"/><rect x="10" y="9" width="2" height="2"/></g>
<g fill="#222"><rect x="9" y="2" width="2" height="2"/><rect x="6" y="5" width="2" height="2"/><rect x="9" y="5" width="2" height="2"/><rect x="3" y="8" width="2" height="2"/><rect x="6" y="8" width="2" height="2"/><rect x="9" y="8" width="2" height="2"/></g>
</svg>


</body></html>
